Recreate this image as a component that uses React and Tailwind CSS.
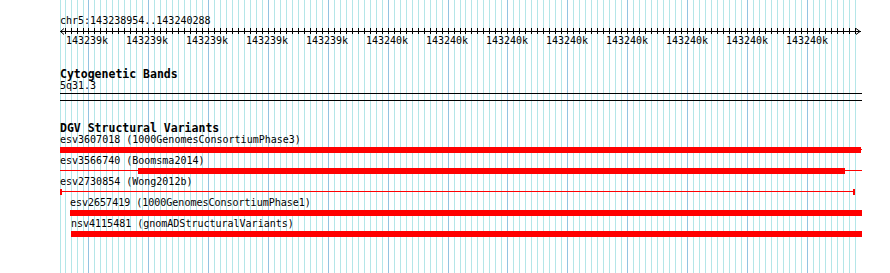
import React from "react";

const START = 143239000;
function gridLines() {
  const out = [];
  out.push({ x: 60, major: false });
  for (let bp = 143238960; bp <= 143240280; bp += 10) {
    let x = Math.round(88 + (bp - START) * 0.5992);
    if (bp < START) x += 1;
    out.push({ x, major: bp % 100 === 0 });
  }
  return out;
}

const LINES = gridLines();
const LABELS = [
  "143239k", "143239k", "143239k", "143239k", "143239k",
  "143240k", "143240k", "143240k", "143240k", "143240k", "143240k", "143240k", "143240k",
];

function Grid() {
  return (
    <svg
      className="absolute left-0 top-0"
      width="890"
      height="273"
      shapeRendering="crispEdges"
    >
      {LINES.map((l, i) => (
        <line
          key={i}
          x1={l.x + 0.5}
          x2={l.x + 0.5}
          y1="0"
          y2="273"
          stroke={l.major ? "#94c3e2" : "#b4e6e8"}
          strokeWidth="1"
        />
      ))}
    </svg>
  );
}

function Ruler() {
  return (
    <svg className="block" width="802" height="8" shapeRendering="crispEdges">
      <line x1="0" x2="801" y1="4.5" y2="4.5" stroke="#000" strokeWidth="1" />
      {LINES.slice(1).map((l, i) => (
        <line
          key={i}
          x1={l.x - 60 + 0.5}
          x2={l.x - 60 + 0.5}
          y1="1"
          y2="7"
          stroke="#000"
          strokeWidth="1"
        />
      ))}
      <polyline points="4,1.5 0.5,4.5 4,7.5" fill="none" stroke="#000" strokeWidth="1" shapeRendering="auto" />
      <polyline points="796,1.5 800,4.5 796,7.5" fill="none" stroke="#000" strokeWidth="1" shapeRendering="auto" />
    </svg>
  );
}

export default function App() {
  return (
    <div className="relative h-[273px] w-[890px] overflow-hidden bg-white font-['DejaVu_Sans_Mono',monospace] text-black">
      <Grid />
      <div className="relative pl-[60px] pt-[15px]">
        <div className="h-[12px] whitespace-nowrap text-[10px] leading-[12px]">
          chr5:143238954..143240288
        </div>
        <Ruler />
        <div className="flex h-[12px] pl-[6px] text-[10px] leading-[12px]">
          {LABELS.map((l, i) => (
            <div key={i} className="w-[60px] shrink-0 whitespace-nowrap">
              {l}
            </div>
          ))}
        </div>

        <div className="mt-[21px] h-[12px] whitespace-nowrap text-[11.5px] font-bold leading-[12px]">
          Cytogenetic Bands
        </div>
        <div className="h-[12px] text-[10px] leading-[12px]">5q31.3</div>
        <div className="mt-[1px] h-[1px] w-[802px] bg-black" />
        <div className="mt-[6px] h-[1px] w-[802px] bg-black" />

        <div className="mt-[21px] h-[12px] whitespace-nowrap text-[11.5px] font-bold leading-[12px]">
          DGV Structural Variants
        </div>

        {/* row 1 */}
        <div className="h-[12px] whitespace-nowrap text-[10px] leading-[12px]">
          esv3607018 (1000GenomesConsortiumPhase3)
        </div>
        <div className="mb-[2px] mt-[1px] flex h-[6px] items-start">
          <div className="h-[6px] w-[801px] bg-[#ff0000]" />
          <div className="mt-[2px] h-[1px] w-[1px] bg-[#ff0000]" />
        </div>

        {/* row 2 */}
        <div className="h-[12px] whitespace-nowrap text-[10px] leading-[12px]">
          esv3566740 (Boomsma2014)
        </div>
        <div className="mb-[2px] mt-[1px] flex h-[6px] items-start">
          <div className="mt-[2px] h-[1px] w-[78px] bg-[#ff0000]" />
          <div className="h-[6px] w-[707px] bg-[#ff0000]" />
          <div className="mt-[2px] h-[1px] w-[17px] bg-[#ff0000]" />
        </div>

        {/* row 3 */}
        <div className="h-[12px] whitespace-nowrap text-[10px] leading-[12px]">
          esv2730854 (Wong2012b)
        </div>
        <div className="mb-[2px] mt-[1px] flex h-[6px] items-start">
          <div className="h-[6px] w-[2px] bg-[#ff0000]" />
          <div className="mt-[2px] h-[1px] w-[791px] bg-[#ff0000]" />
          <div className="h-[6px] w-[2px] bg-[#ff0000]" />
        </div>

        {/* row 4 */}
        <div className="ml-[10px] h-[12px] whitespace-nowrap text-[10px] leading-[12px]">
          esv2657419 (1000GenomesConsortiumPhase1)
        </div>
        <div className="mb-[2px] ml-[10px] mt-[1px] flex h-[6px] items-start">
          <div className="h-[6px] w-[792px] bg-[#ff0000]" />
        </div>

        {/* row 5 */}
        <div className="ml-[11px] h-[12px] whitespace-nowrap text-[10px] leading-[12px]">
          nsv4115481 (gnomADStructuralVariants)
        </div>
        <div className="mb-[2px] ml-[11px] mt-[1px] flex h-[6px] items-start">
          <div className="h-[6px] w-[791px] bg-[#ff0000]" />
        </div>
      </div>
    </div>
  );
}
